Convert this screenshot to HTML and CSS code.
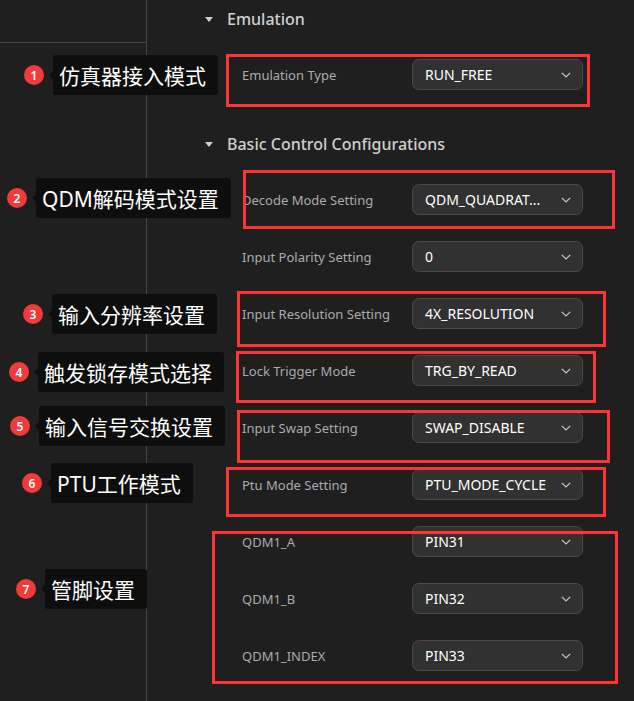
FILE: index.html
```html
<!DOCTYPE html>
<html lang="zh-CN">
<head>
<meta charset="utf-8">
<title>QDM Configuration</title>
<link rel="stylesheet" href="styles.css">
</head>
<body>
<div class="app">
  <aside class="sidebar">
    <div class="sidebar-head"></div>
  </aside>
  <main class="panel">
    <section class="group">
      <h2 class="group-title"><span class="caret"></span>Emulation</h2>
      <div class="rows">
        <div class="row"><span class="label">Emulation Type</span><div class="select"><span class="value">RUN_FREE</span><svg class="chev" width="10" height="6" viewBox="0 0 10 6"><polyline points="0.8,0.8 5,5 9.2,0.8"/></svg></div></div>
      </div>
    </section>
    <section class="group group-basic">
      <h2 class="group-title"><span class="caret"></span>Basic Control Configurations</h2>
      <div class="rows">
        <div class="row"><span class="label">Decode Mode Setting</span><div class="select"><span class="value">QDM_QUADRAT...</span><svg class="chev" width="10" height="6" viewBox="0 0 10 6"><polyline points="0.8,0.8 5,5 9.2,0.8"/></svg></div></div>
        <div class="row"><span class="label">Input Polarity Setting</span><div class="select"><span class="value">0</span><svg class="chev" width="10" height="6" viewBox="0 0 10 6"><polyline points="0.8,0.8 5,5 9.2,0.8"/></svg></div></div>
        <div class="row"><span class="label">Input Resolution Setting</span><div class="select"><span class="value">4X_RESOLUTION</span><svg class="chev" width="10" height="6" viewBox="0 0 10 6"><polyline points="0.8,0.8 5,5 9.2,0.8"/></svg></div></div>
        <div class="row"><span class="label">Lock Trigger Mode</span><div class="select"><span class="value">TRG_BY_READ</span><svg class="chev" width="10" height="6" viewBox="0 0 10 6"><polyline points="0.8,0.8 5,5 9.2,0.8"/></svg></div></div>
        <div class="row"><span class="label">Input Swap Setting</span><div class="select"><span class="value">SWAP_DISABLE</span><svg class="chev" width="10" height="6" viewBox="0 0 10 6"><polyline points="0.8,0.8 5,5 9.2,0.8"/></svg></div></div>
        <div class="row"><span class="label">Ptu Mode Setting</span><div class="select"><span class="value">PTU_MODE_CYCLE</span><svg class="chev" width="10" height="6" viewBox="0 0 10 6"><polyline points="0.8,0.8 5,5 9.2,0.8"/></svg></div></div>
        <div class="row"><span class="label">QDM1_A</span><div class="select"><span class="value">PIN31</span><svg class="chev" width="10" height="6" viewBox="0 0 10 6"><polyline points="0.8,0.8 5,5 9.2,0.8"/></svg></div></div>
        <div class="row"><span class="label">QDM1_B</span><div class="select"><span class="value">PIN32</span><svg class="chev" width="10" height="6" viewBox="0 0 10 6"><polyline points="0.8,0.8 5,5 9.2,0.8"/></svg></div></div>
        <div class="row"><span class="label">QDM1_INDEX</span><div class="select"><span class="value">PIN33</span><svg class="chev" width="10" height="6" viewBox="0 0 10 6"><polyline points="0.8,0.8 5,5 9.2,0.8"/></svg></div></div>
      </div>
    </section>
  </main>

  <div class="mark mark-1"></div>
  <div class="mark mark-2"></div>
  <div class="mark mark-3"></div>
  <div class="mark mark-4"></div>
  <div class="mark mark-5"></div>
  <div class="mark mark-6"></div>
  <div class="mark mark-7"></div>

  <div class="note note-1"><span class="badge">1</span><span class="tip">仿真器接入模式</span></div>
  <div class="note note-2"><span class="badge">2</span><span class="tip">QDM解码模式设置</span></div>
  <div class="note note-3"><span class="badge">3</span><span class="tip">输入分辨率设置</span></div>
  <div class="note note-4"><span class="badge">4</span><span class="tip">触发锁存模式选择</span></div>
  <div class="note note-5"><span class="badge">5</span><span class="tip">输入信号交换设置</span></div>
  <div class="note note-6"><span class="badge">6</span><span class="tip">PTU工作模式</span></div>
  <div class="note note-7"><span class="badge">7</span><span class="tip">管脚设置</span></div>
</div>
</body>
</html>
```
FILE: styles.css
```css
* { box-sizing: border-box; }
html, body { margin: 0; padding: 0; background: #1f1f1f; }
body {
  font-family: "Noto Sans", "Noto Sans CJK SC", sans-serif;
  color: #cccccc;
}
.app {
  position: relative;
  display: flex;
  width: 634px;
  height: 701px;
  overflow: hidden;
  background: #1f1f1f;
}
.sidebar {
  width: 147px;
  flex: none;
  border-right: 1px solid #454545;
}
.sidebar-head {
  height: 43px;
  border-bottom: 1px solid #454545;
}
.panel {
  flex: 1;
  padding-left: 58px;
}
.group-title {
  margin: 0;
  height: 38px;
  display: flex;
  align-items: center;
  font-size: 16px;
  font-weight: 500;
  color: #cfcfcf;
}
.caret {
  width: 0;
  height: 0;
  border-left: 4px solid transparent;
  border-right: 4px solid transparent;
  border-top: 5px solid #cfcfcf;
  margin-right: 14px;
}
.rows {
  padding-top: 8px;
  padding-left: 37px;
}
.group-basic { margin-top: 22px; }
.row {
  height: 57px;
  display: flex;
  align-items: center;
}
.label {
  width: 170px;
  font-size: 13px;
  color: #a9abae;
}
.select {
  width: 171px;
  height: 31px;
  border: 1px solid #4a4a4a;
  border-radius: 7px;
  background: #313131;
  display: flex;
  align-items: center;
  justify-content: space-between;
  padding: 0 11px 0 12px;
}
.value {
  font-size: 14px;
  color: #ffffff;
}
.chev polyline {
  fill: none;
  stroke: #c8c8c8;
  stroke-width: 1.2;
}

/* annotation overlays */
.mark {
  position: absolute;
  border: 3px solid #ff3434;
}
.mark-1 { left: 226px; top: 54px; width: 364px; height: 53px; }
.mark-2 { left: 243px; top: 170px; width: 372px; height: 59px; }
.mark-3 { left: 237px; top: 291px; width: 369px; height: 56px; }
.mark-4 { left: 236px; top: 351px; width: 360px; height: 52px; }
.mark-5 { left: 237px; top: 410px; width: 373px; height: 53px; }
.mark-6 { left: 226px; top: 467px; width: 380px; height: 50px; }
.mark-7 { left: 212px; top: 531px; width: 406px; height: 153px; }

.note {
  position: absolute;
  display: flex;
  align-items: center;
  gap: 9px;
  height: 40px;
}
.note-1 { left: 24px; top: 55px; }
.note-2 { left: 7px; top: 178px; }
.note-3 { left: 23px; top: 294px; }
.note-4 { left: 9px; top: 352px; }
.note-5 { left: 10px; top: 406px; }
.note-6 { left: 22px; top: 463px; }
.note-7 { left: 16px; top: 569px; }

.badge {
  width: 20px;
  height: 20px;
  border-radius: 50%;
  background: #f23a3a;
  color: #ffffff;
  font-size: 12px;
  font-weight: 600;
  display: flex;
  align-items: center;
  justify-content: center;
  font-family: "Noto Sans", sans-serif;
}
.tip {
  position: relative;
  height: 40px;
  display: flex;
  align-items: center;
  padding: 0 12px 0 6px;
  background: #0e0e0e;
  border-radius: 3px;
  color: #ffffff;
  font-size: 21px;
  font-family: "Noto Sans", "Noto Sans CJK SC", sans-serif;
  white-space: nowrap;
}
.tip::before {
  content: "";
  position: absolute;
  left: -4px;
  top: 50%;
  margin-top: -4px;
  border-top: 4px solid transparent;
  border-bottom: 4px solid transparent;
  border-right: 4px solid #0e0e0e;
}
```
